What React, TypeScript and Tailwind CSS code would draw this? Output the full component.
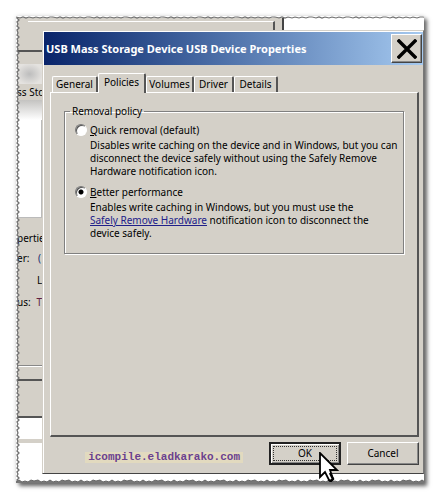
import { useState } from "react";
import type { ReactNode } from "react";

const tabs = [
  { name: "General", width: "w-[46px]" },
  { name: "Policies", width: "w-[48px]" },
  { name: "Volumes", width: "w-[48px]" },
  { name: "Driver", width: "w-[40px]" },
  { name: "Details", width: "w-[44px]" },
];

function TornEdges() {
  return (
    <svg className="pointer-events-none absolute inset-0 h-full w-full overflow-visible" aria-hidden="true">
      <defs>
        <pattern id="tear-left" width="4" height="25" patternUnits="userSpaceOnUse">
          <path d="M0 0H2L1 2L3 4L1 6L2 8L1 10L3 12L1 14L2 17L1 19L3 21L1 23L2 25H0Z" fill="#fff" />
          <path d="M2 0L1 2L3 4L1 6L2 8L1 10L3 12L1 14L2 17L1 19L3 21L1 23L2 25" fill="none" stroke="#707070" strokeWidth="1.3" />
        </pattern>
        <pattern id="tear-top" width="37" height="4" patternUnits="userSpaceOnUse">
          <path d="M0 0H37V1L34 2L31 1L27 2L24 1L20 2L17 1L13 2L10 1L7 2L4 1L0 1Z" fill="#fff" />
          <path d="M0 1L4 2L7 1L10 2L13 1L17 2L20 1L24 2L27 1L31 2L34 1L37 1" fill="none" stroke="#707070" strokeWidth="1.2" />
        </pattern>
        <pattern id="tear-bottom" width="31" height="4" patternUnits="userSpaceOnUse">
          <path d="M0 4V3L3 1L6 3L9 2L12 3L15 1L18 2L22 1L25 3L28 2L31 3V4Z" fill="#777" />
          <path d="M0 3L3 1L6 3L9 2L12 3L15 1L18 2L22 1L25 3L28 2L31 3" fill="none" stroke="#666" />
        </pattern>
      </defs>
      <rect width="4" height="100%" fill="url(#tear-left)" />
      <rect width="100%" height="4" fill="url(#tear-top)" />
      <svg y="100%" overflow="visible" width="100%" height="4">
        <g transform="translate(0 -4)">
          <rect width="100%" height="4" fill="url(#tear-bottom)" />
        </g>
      </svg>
    </svg>
  );
}

function WindowBehindTop() {
  return (
    <div className="flex h-[14px] bg-white">
      <div className="flex w-[268px] border-r-2 border-[#444] bg-[#d4d0c8] pr-[7px]">
        <div className="mt-[5px] ml-3 flex-1 border-t border-r-2 border-t-white border-r-[#555]" />
      </div>
    </div>
  );
}

function WindowBehindLeft() {
  return (
    <div className="flex w-[26px] shrink-0 flex-col overflow-hidden bg-[#d4d0c8] pl-px whitespace-nowrap">
      <div className="h-[22px] shrink-0 border-b-2 border-[#555]" />
      <div className="h-3 shrink-0" />
      <div className="h-5 shrink-0 bg-[radial-gradient(ellipse_at_center,#bdbdbd,#e4e2df_75%)]" />
      <div className="h-4 shrink-0 pt-[2px]">ss Storage</div>
      <div className="h-5 shrink-0 bg-[linear-gradient(#c4c3c1,#fff)]" />
      <div className="h-[98px] shrink-0 border-r border-b border-[#bbb] bg-white" />
      <div className="mt-[14px] shrink-0">perties</div>
      <div className="mt-[7px] flex shrink-0 justify-between"><span>er:</span><span className="pr-px text-[#1b2c70]">(</span></div>
      <div className="mt-[9px] shrink-0 pl-5">L</div>
      <div className="mt-[9px] flex shrink-0 justify-between"><span>us:</span><span className="text-[#602040]">T</span></div>
      <div className="h-[57px] shrink-0 border-b border-[#888]" />
      <div className="h-[15px] shrink-0 border-t border-b-2 border-t-white border-b-[#555]" />
      <div className="h-[37px] shrink-0 border-b-2 border-[#555]" />
      <div className="h-[21px] shrink-0 bg-white" />
      <div className="h-1 shrink-0" />
      <div className="flex-1 bg-white" />
    </div>
  );
}

function CloseIcon() {
  return (
    <svg viewBox="0 0 20 20" className="h-5 w-5" aria-hidden="true">
      <path d="M2 2L18 18M18 2L2 18" stroke="#000" strokeWidth="3.4" strokeLinecap="square" />
    </svg>
  );
}

function Option({
  id, checked, onSelect, label, children,
}: {
  id: string; checked: boolean; onSelect: () => void; label: string; children: ReactNode;
}) {
  return (
    <div className="flex gap-[3px]">
      <input
        id={id}
        type="radio"
        name="policy"
        checked={checked}
        onChange={onSelect}
        className="h-3 w-3 shrink-0 appearance-none rounded-full border border-t-[#777] border-r-white border-b-white border-l-[#777] bg-white shadow-[inset_1px_1px_0_#555] checked:bg-[radial-gradient(circle,#000_2px,#fff_3px)]"
      />
      <div>
        <label htmlFor={id} className="block">
          <span className="underline">{label[0]}</span>{label.slice(1)}
        </label>
        <p className="mt-[2px] whitespace-nowrap">{children}</p>
      </div>
    </div>
  );
}

function Cursor() {
  return (
    <svg viewBox="0 0 20 31" className="pointer-events-none absolute top-[10px] left-[50px] z-10 h-[31px] w-5" aria-hidden="true">
      <path d="M1 1V25L6 20L10 28Q12 30 14 27L11 18H18Z" fill="#fff" stroke="#000" strokeWidth="1.8" strokeLinejoin="miter" />
      <path d="M11 21L14 27Q12 30 10 28" fill="none" stroke="#000" strokeWidth="2.4" />
    </svg>
  );
}

export default function App() {
  const [tab, setTab] = useState("Policies");
  const [policy, setPolicy] = useState("better");

  return (
    <main className="bg-white pt-4 pr-[11px] pb-4 pl-4 font-['Noto_Sans','Liberation_Sans',sans-serif] text-[10px] leading-[13px] text-black">
      <div className="relative bg-white pb-[9px] shadow-[3px_3px_4px_#666,0_0_4px_#ddd]">
        <WindowBehindTop />
        <div className="flex">
          <WindowBehindLeft />
          <section role="dialog" aria-labelledby="title" className="min-w-0 flex-1 border border-t-[#d4d0c8] border-r-[#777] border-b-[#444] border-l-[#d4d0c8] bg-[#d4d0c8]">
            <div className="border-t border-l border-white">
              <header className="flex h-[33px] items-center justify-between bg-linear-to-r from-[#0a246a] to-[#a6caf0] pr-px pl-[2px]">
                <h1 id="title" className="font-['Noto_Sans',sans-serif] text-[11px] font-bold whitespace-nowrap text-white">
                  USB Mass Storage Device USB Device Properties
                </h1>
                <button aria-label="Close" className="flex h-[29px] w-[31px] items-center justify-center border border-t-white border-r-[#444] border-b-[#444] border-l-white bg-[#d4d0c8] shadow-[inset_-1px_-1px_0_#888]">
                  <CloseIcon />
                </button>
              </header>

              <div className="px-1 pt-2 pl-[6px]">
                <div role="tablist" className="flex h-[19px] items-end px-[2px]">
                  {tabs.map(({ name, width }) => (
                    <button
                      key={name}
                      role="tab"
                      aria-selected={tab === name}
                      onClick={() => setTab(name)}
                      className={`${width} rounded-t-[2px] border-t border-r-2 border-l border-t-white border-r-[#555] border-l-white bg-[#d4d0c8] text-center ${tab === name ? "relative z-10 -mb-px h-5 pb-[3px]" : "h-4"}`}
                    >
                      {name}
                    </button>
                  ))}
                </div>

                <div role="tabpanel" className="min-h-[345px] border-t border-r-2 border-b-2 border-l border-t-white border-r-[#555] border-b-[#555] border-l-white px-[13px] pt-3">
                  <fieldset className="min-h-[149px] min-w-0 border border-[#808080] px-[10px] pb-3 shadow-[1px_1px_0_#fff,inset_1px_1px_0_#fff]">
                    <legend className="-ml-[5px] px-[2px]">Removal policy</legend>
                    <div className="flex flex-col gap-2 pt-[6px]">
                      <Option id="quick" label="Quick removal (default)" checked={policy === "quick"} onSelect={() => setPolicy("quick")}>
                        Disables write caching on the device and in Windows, but you can<br />
                        disconnect the device safely without using the Safely Remove<br />
                        Hardware notification icon.
                      </Option>
                      <Option id="better" label="Better performance" checked={policy === "better"} onSelect={() => setPolicy("better")}>
                        Enables write caching in Windows, but you must use the<br />
                        <a href="#remove" className="text-[#20208a] underline">Safely Remove Hardware</a> notification icon to disconnect the<br />
                        device safely.
                      </Option>
                    </div>
                  </fieldset>
                </div>
              </div>

              <footer className="flex items-start justify-end gap-[6px] pt-[5px] pr-1 pb-2">
                <span className="mt-[10px] mr-5 bg-[#e2dabf] px-[3px] font-['Liberation_Mono',monospace] text-[11px] leading-[11px] font-bold text-[#6a4190]">
                  icompile.eladkarako.com
                </span>
                <div className="relative">
                  <button className="h-[23px] w-[72px] border-2 border-[#222] bg-[#d4d0c8] p-[2px] shadow-[inset_1px_1px_0_#fff,inset_-1px_-1px_0_#888]">
                    <span className="block border border-dotted border-[#333] text-center">OK</span>
                  </button>
                  <Cursor />
                </div>
                <button className="h-[23px] w-[72px] border border-t-white border-r-[#444] border-b-[#444] border-l-white bg-[#d4d0c8] shadow-[inset_-1px_-1px_0_#888]">Cancel</button>
              </footer>
            </div>
          </section>
        </div>
        <TornEdges />
      </div>
    </main>
  );
}
